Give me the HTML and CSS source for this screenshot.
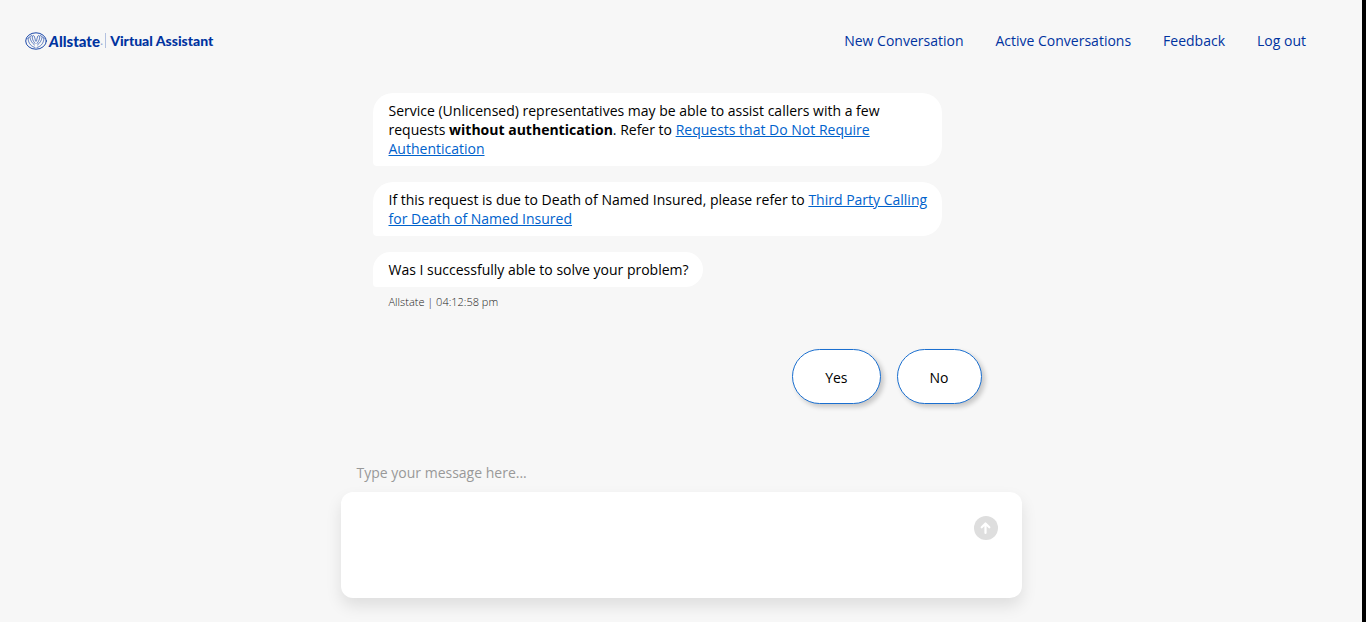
FILE: index.html
```html
<!DOCTYPE html>
<html lang="en">
<head>
<meta charset="utf-8">
<meta name="viewport" content="width=device-width, initial-scale=1">
<title>Allstate Virtual Assistant</title>
<link rel="stylesheet" href="styles.css">
</head>
<body>
<header class="topbar">
  <a class="brand" href="#">
    <svg class="brand-mark" viewBox="0 0 22 18" aria-hidden="true" fill="none" stroke="#0033a0" stroke-linecap="round">
      <ellipse cx="11" cy="9" rx="10.300" ry="8.200" stroke-width="0.9"/>
      <path d="M10 15.500C6.500 14.500 3.500 12 3 6.500M3 6.500C3.300 5 4.300 4.500 5 5.500C5.500 8.500 7 11 9.500 13M5.200 5C5.500 3 6.800 3 7.200 4.200C7.200 7 8 9 10 11.500M7.500 4C8.200 3 9.300 3.500 9.500 5C9.800 6.500 10.500 7.500 10.500 9" stroke-width="0.6"/>
      <path d="M12 15.500C15.500 14.500 18.500 12 19 6.500M19 6.500C18.700 5 17.700 4.500 17 5.500C16.500 8.500 15 11 12.500 13M16.800 5C16.500 3 15.200 3 14.800 4.200C14.800 7 14 9 12 11.500M14.500 4C13.800 3 12.700 3.500 12.500 5C12.200 6.500 11.500 7.500 11.500 9" stroke-width="0.6"/>
    </svg>
    <span class="brand-name"><i>A</i>llstate</span><span class="brand-dot">.</span>
    <span class="brand-product">Virtual Assistant</span>
  </a>
  <nav class="nav">
    <a href="#">New Conversation</a>
    <a href="#">Active Conversations</a>
    <a href="#">Feedback</a>
    <a href="#">Log out</a>
  </nav>
</header>
<main class="chat">
  <section class="thread">
    <p class="bubble">Service (Unlicensed) representatives may be able to assist callers with a few requests <strong>without authentication</strong>. Refer to <a href="#">Requests that Do Not Require Authentication</a></p>
    <p class="bubble">If this request is due to Death of Named Insured, please refer to <a href="#">Third Party Calling for Death of Named Insured</a></p>
    <p class="bubble">Was I successfully able to solve your problem?</p>
  </section>
  <p class="meta">Allstate | 04:12:58 pm</p>
  <div class="replies">
    <button class="reply" type="button">Yes</button>
    <button class="reply" type="button">No</button>
  </div>
  <form class="composer">
    <label class="composer-label" for="message">Type your message here...</label>
    <div class="composer-box">
      <textarea id="message" class="composer-input"></textarea>
      <button class="send" type="button" aria-label="Send">
        <svg viewBox="0 0 24 24" aria-hidden="true">
          <circle cx="12" cy="12" r="12" fill="#dedede"/>
          <path d="M11.500 17V8M7.700 11.300L11.500 7.500L15.300 11.300" fill="none" stroke="#fff" stroke-width="2.200" stroke-linecap="round" stroke-linejoin="round"/>
        </svg>
      </button>
    </div>
  </form>
</main>
</body>
</html>
```
FILE: styles.css
```css
* {
  box-sizing: border-box;
}

body {
  margin: 0;
  min-height: 100vh;
  border-right: 4px solid #000;
  background: #f7f7f7;
  color: #000;
  font-family: "Open Sans", "Noto Sans", sans-serif;
  font-size: 14px;
  line-height: 19px;
}

p {
  margin: 0;
}

.topbar {
  display: flex;
  align-items: center;
  justify-content: space-between;
  padding: 31px 56px 31px 25px;
}

.brand {
  display: flex;
  align-items: center;
  color: #0033a0;
  text-decoration: none;
}

.brand-mark {
  width: 22px;
  height: 18px;
  margin-right: 2px;
}

.brand-name {
  padding-top: 1px;
  font-family: Lato, sans-serif;
  font-size: 15px;
  font-weight: 900;
  line-height: 18px;
}

.brand-dot {
  color: #8fa3d0;
  font-size: 12px;
}

.brand-product {
  margin-left: 2px;
  padding: 1px 0 0 4px;
  border-left: 1px solid #b3c1e0;
  font-family: Lato, sans-serif;
  font-size: 14px;
  font-weight: 900;
  line-height: 14px;
}

.nav {
  display: flex;
  gap: 32px;
}

.nav a {
  color: #0033a0;
  text-decoration: none;
}

.chat {
  width: 50%;
  margin: 0 auto;
  padding-top: 12px;
}

.thread {
  display: flex;
  flex-direction: column;
  align-items: flex-start;
  gap: 16px;
  padding: 0 80px 0 32px;
}

.bubble {
  padding: 8px 14px 8px 16px;
  border-radius: 20px 20px 20px 4px;
  background: #fff;
}

.bubble a {
  color: #0062cc;
}

.meta {
  padding: 7px 48px 0;
  color: #222;
  font-size: 11px;
  font-weight: 300;
  line-height: 15px;
}

.replies {
  display: flex;
  justify-content: flex-end;
  gap: 16px;
  padding: 40px 40px 59px;
}

.reply {
  padding: 18px 32px 16px;
  border: 1px solid #1a6fd0;
  border-radius: 28px;
  background: #fff;
  box-shadow: 3px 3px 5px rgba(0, 0, 0, 0.2);
  color: #000;
  font: inherit;
}

.composer-label {
  display: block;
  padding: 0 16px 10px;
  color: #999;
}

.composer-box {
  display: flex;
  align-items: flex-start;
  padding: 24px;
  border-radius: 12px;
  background: #fff;
  box-shadow: 0 8px 16px rgba(0, 0, 0, 0.1);
}

.composer-input {
  flex: 1;
  height: 58px;
  padding: 0;
  border: 0;
  outline: 0;
  resize: none;
  background: transparent;
  font: inherit;
}

.send {
  width: 24px;
  height: 24px;
  padding: 0;
  border: 0;
  background: none;
}

.send svg {
  display: block;
}
```
